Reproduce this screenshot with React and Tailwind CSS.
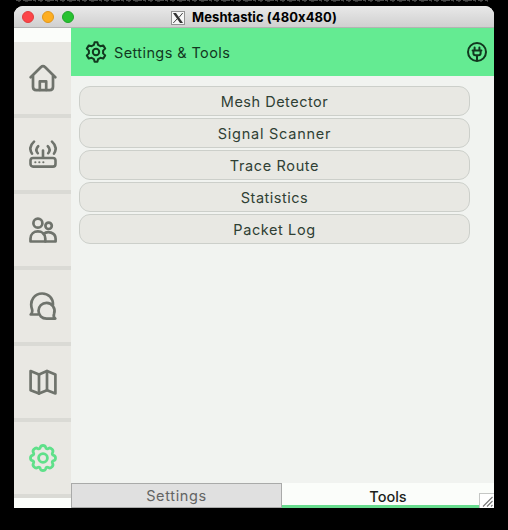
const stroke = {
  fill: 'none',
  stroke: 'currentColor',
  strokeLinecap: 'round',
  strokeLinejoin: 'round',
};

function HomeIcon() {
  return (
    <svg width="28" height="28" viewBox="0 0 28 28" strokeWidth="2.7" {...stroke}>
      <path d="M1.7 13.2 L11.8 3.2 Q14 1.2 16.2 3.2 L26.3 13.2" />
      <path d="M4 12 V22.8 Q4 26.2 7.2 26.2 H20.8 Q24 26.2 24 22.8 V12" />
      <path d="M10.8 26 V17.4 H17.2 V26" />
    </svg>
  );
}

function RouterIcon() {
  return (
    <svg width="28" height="28" viewBox="0 0 28 28" strokeWidth="2.6" {...stroke}>
      <rect x="1.5" y="18" width="25" height="8.6" rx="2.6" />
      <path d="M14 10.5 V17.5" />
      <path d="M9.2 6.2 Q5.8 9.5 8.8 13.2 M18.8 6.2 Q22.2 9.5 19.2 13.2" />
      <path d="M5 1.6 Q-1.2 7.2 3 13.6 M23 1.6 Q29.2 7.2 25 13.6" />
      <path d="M6.3 22.3 h.1 M10.3 22.3 h.1 M14.3 22.3 h.1" strokeWidth="2.1" />
    </svg>
  );
}

function PeopleIcon() {
  return (
    <svg width="28" height="28" viewBox="0 0 28 28" strokeWidth="2.7" {...stroke}>
      <circle cx="8.9" cy="7.2" r="4.5" />
      <circle cx="19.6" cy="9.8" r="3.2" />
      <path d="M1.5 25.5 V22.6 C1.5 13 16.3 13 16.3 22.6 V25.5 Z" />
      <path d="M14.6 18 C18.5 14.3 26.6 16.4 26.6 22.8 V25.5 H16.3" />
    </svg>
  );
}

function ChatIcon() {
  return (
    <svg width="28" height="28" viewBox="0 0 28 28" strokeWidth="2.7" {...stroke}>
      <path d="M9 22.5 H1.7 C3.3 21.2 3.6 19.8 3.1 17.5 C-0.1 8 6 1.5 13.2 1.5 C19.6 1.5 24 6.2 24 12.4" />
      <path d="M17.6 10.8 C13 10.8 9.5 14.4 9.5 18.8 C9.5 23.4 13 26.6 17.6 26.6 H26.3 C24.6 25.4 24.3 23.8 25.1 21.7 C26.8 16.2 23.1 10.8 17.6 10.8 Z" />
    </svg>
  );
}

function MapIcon() {
  return (
    <svg width="28" height="28" viewBox="0 0 28 28" strokeWidth="2.7" {...stroke}>
      <path d="M1.6 3 L10 6.4 L18 3 L26.4 6.4 V25.4 L18 22.2 L10 25.6 L1.6 22.2 Z" />
      <path d="M10 6.4 V25.6 M18 3 V22.2" />
    </svg>
  );
}

function CogIcon() {
  return (
    <svg width="28" height="28" viewBox="0 0 28 28" strokeWidth="2.8" {...stroke}>
      <circle cx="14" cy="14" r="4.4" />
      <path d="M11.3 3.4 Q11.8 1.5 14 1.5 Q16.2 1.5 16.7 3.4 Q17.2 5.5 19.4 4.4 Q21.3 3.4 22.9 5.1 Q24.6 6.7 23.6 8.6 Q22.5 10.8 24.6 11.3 Q26.5 11.8 26.5 14 Q26.5 16.2 24.6 16.7 Q22.5 17.2 23.6 19.4 Q24.6 21.3 22.9 22.9 Q21.3 24.6 19.4 23.6 Q17.2 22.5 16.7 24.6 Q16.2 26.5 14 26.5 Q11.8 26.5 11.3 24.6 Q10.8 22.5 8.6 23.6 Q6.7 24.6 5.1 22.9 Q3.4 21.3 4.4 19.4 Q5.5 17.2 3.4 16.7 Q1.5 16.2 1.5 14 Q1.5 11.8 3.4 11.3 Q5.5 10.8 4.4 8.6 Q3.4 6.7 5.1 5.1 Q6.7 3.4 8.6 4.4 Q10.8 5.5 11.3 3.4 Z" />
    </svg>
  );
}

function HeaderGear() {
  return (
    <svg width="22" height="22" viewBox="0 0 22 22" strokeWidth="2" {...stroke}>
      <circle cx="11" cy="11" r="3.2" />
      <path d="M9.6 1.2 H12.4 L13.1 3.9 L15.4 5.2 L18.2 4.4 L20.2 7.6 L18.1 9.6 V12.4 L20.2 14.4 L18.2 17.6 L15.4 16.8 L13.1 18.1 L12.4 20.8 H9.6 L8.9 18.1 L6.6 16.8 L3.8 17.6 L1.8 14.4 L3.9 12.4 V9.6 L1.8 7.6 L3.8 4.4 L6.6 5.2 L8.9 3.9 Z" />
    </svg>
  );
}

function PlugIcon() {
  return (
    <svg width="20" height="20" viewBox="0 0 20 20" strokeWidth="2" {...stroke}>
      <circle cx="10" cy="10" r="9" />
      <path d="M7.6 5.6 V8 M12.4 5.6 V8 M5.6 8.6 H14.4 M6.4 8.6 V11.2 Q6.4 13.2 8.4 13.2 H11.6 Q13.6 13.2 13.6 11.2 V8.6 M10 13.4 V18.4" />
    </svg>
  );
}

const navItems = [HomeIcon, RouterIcon, PeopleIcon, ChatIcon, MapIcon, CogIcon];

const tools = [
  { label: 'Mesh Detector', spacing: 'tracking-[0.5px]' },
  { label: 'Signal Scanner', spacing: 'tracking-[0.75px]' },
  { label: 'Trace Route', spacing: 'tracking-[0.63px]' },
  { label: 'Statistics', spacing: 'tracking-[0.5px]' },
  { label: 'Packet Log', spacing: 'tracking-[0.6px]' },
];

function TitleBar() {
  return (
    <div className="relative flex h-[22px] shrink-0 items-center justify-center border-b border-[#b3b3b3] bg-linear-to-b from-[#e9e9e9] to-[#d0d0d0]">
      <div className="absolute top-[5px] left-2 flex gap-2">
        <span className="size-3 rounded-full border border-[#df3e3e] bg-[#fc4549]" />
        <span className="size-3 rounded-full border border-[#df961c] bg-[#fdae22]" />
        <span className="size-3 rounded-full border border-[#1fa52b] bg-[#28c231]" />
      </div>
      <svg width="14" height="14" viewBox="0 0 14 14" className="mt-[2px] mr-[7px] shrink-0">
        <rect x=".5" y=".5" width="13" height="13" fill="#f7f7f7" stroke="#929292" />
        <path d="M2 2 H5 L12 12 H9 Z" fill="#333" />
        <path d="M11.7 2 L8 6.4 M6 8 L2.3 12" stroke="#444" strokeWidth="1" />
      </svg>
      <span className="mt-[2px] text-[13px] leading-none font-bold tracking-[0.08px] whitespace-nowrap text-black [font-feature-settings:'calt'_0]">
        Meshtastic (480x480)
      </span>
    </div>
  );
}

export default function App() {
  return (
    <div className="h-[530px] w-[508px] overflow-hidden bg-black pl-[14px] font-['Inter','Noto_Sans',sans-serif]">
      <div className="h-[6px]">
        <svg width="474" height="3" viewBox="0 0 474 3" className="block">
          <path d="M2 .5 H474" stroke="#4a4a4a" strokeDasharray="5 2 9 1 3 2" />
          <path d="M4 1.5 H474" stroke="#333" strokeDasharray="2 5 3 7 1 4" />
        </svg>
      </div>
      <div className="flex h-[502px] w-[480px] flex-col overflow-hidden rounded-t-[9px] bg-[#fbfdfa]">
        <TitleBar />
        <div className="flex h-[480px]">
          <nav className="flex w-[57px] shrink-0 flex-col pt-[14px]">
            {navItems.map((Icon, i) => (
              <div
                key={i}
                className={`flex h-[76px] items-center justify-center border-b-4 border-[#dadad5] bg-[#e9e8e3] ${
                  i === 5 ? 'text-[#5fe08a]' : 'text-[#6f736c]'
                }`}
              >
                <Icon />
              </div>
            ))}
          </nav>
          <main className="flex flex-1 flex-col bg-[#f1f3f0]">
            <header className="flex h-12 shrink-0 items-center bg-[#64eb92] pr-[7px] pl-[14px] text-[#12381f]">
              <HeaderGear />
              <span className="ml-[7px] flex-1 pt-[2px] text-[14.5px] leading-5 tracking-[0.4px] whitespace-nowrap">
                Settings &amp; Tools
              </span>
              <PlugIcon />
            </header>
            <div className="flex flex-1 flex-col gap-[2px] pt-[10px] pr-6 pl-2">
              {tools.map(({ label, spacing }) => (
                <button
                  key={label}
                  className={`flex h-[30px] shrink-0 items-center justify-center rounded-[11px] border border-[#cccfca] bg-[#e8e8e3] pt-[2px] text-[14.5px] leading-5 whitespace-nowrap text-[#2f4034] ${spacing}`}
                >
                  {label}
                </button>
              ))}
            </div>
            <div className="relative flex h-[25px] shrink-0">
              <div className="flex w-[211px] items-center justify-center border border-[#a9aaa9] bg-[#e0e0e0] pt-px text-[14.5px] leading-5 tracking-[0.65px] text-[#636463]">
                Settings
              </div>
              <div className="flex flex-1 items-center justify-center border-b-[3px] border-[#67dc8e] bg-[#fbfdfa] pt-[5px] text-[14.5px] leading-5 font-medium text-[#1b1f1c]">
                Tools
              </div>
              <svg width="15" height="15" viewBox="0 0 15 15" className="absolute right-0 bottom-0">
                <rect x=".5" y=".5" width="15" height="15" fill="#fff" stroke="#c5c7c5" />
                <path d="M4 13.5 L13.5 4 M8 13.5 L13.5 8 M12 13.5 L13.5 12" stroke="#777" strokeWidth="1.1" />
              </svg>
            </div>
          </main>
        </div>
      </div>
    </div>
  );
}
